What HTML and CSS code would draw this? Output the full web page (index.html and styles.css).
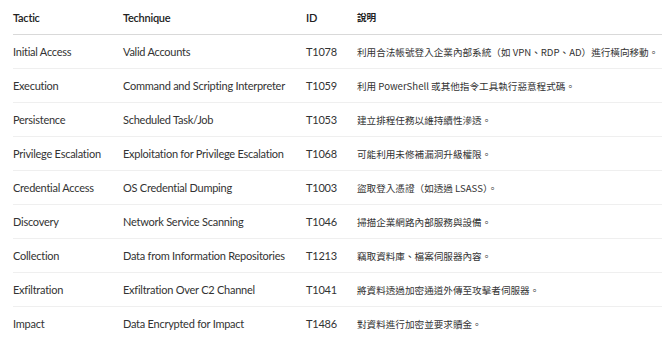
FILE: index.html
```html
<!DOCTYPE html>
<html lang="zh-Hant">
<head>
<meta charset="utf-8">
<link rel="stylesheet" href="styles.css">
</head>
<body>
<div class="table">
  <div class="row head">
    <div class="cell">Tactic</div>
    <div class="cell">Technique</div>
    <div class="cell">ID</div>
    <div class="cell desc">說明</div>
  </div>
  <div class="row">
    <div class="cell">Initial Access</div>
    <div class="cell">Valid Accounts</div>
    <div class="cell">T1078</div>
    <div class="cell desc">利用合法帳號登入企業內部系統（如 VPN、RDP、AD）進行橫向移動。</div>
  </div>
  <div class="row">
    <div class="cell">Execution</div>
    <div class="cell">Command and Scripting Interpreter</div>
    <div class="cell">T1059</div>
    <div class="cell desc">利用 PowerShell 或其他指令工具執行惡意程式碼。</div>
  </div>
  <div class="row">
    <div class="cell">Persistence</div>
    <div class="cell">Scheduled Task/Job</div>
    <div class="cell">T1053</div>
    <div class="cell desc">建立排程任務以維持續性滲透。</div>
  </div>
  <div class="row">
    <div class="cell">Privilege Escalation</div>
    <div class="cell">Exploitation for Privilege Escalation</div>
    <div class="cell">T1068</div>
    <div class="cell desc">可能利用未修補漏洞升級權限。</div>
  </div>
  <div class="row">
    <div class="cell">Credential Access</div>
    <div class="cell">OS Credential Dumping</div>
    <div class="cell">T1003</div>
    <div class="cell desc">盜取登入憑證（如透過 LSASS）。</div>
  </div>
  <div class="row">
    <div class="cell">Discovery</div>
    <div class="cell">Network Service Scanning</div>
    <div class="cell">T1046</div>
    <div class="cell desc">掃描企業網路內部服務與設備。</div>
  </div>
  <div class="row">
    <div class="cell">Collection</div>
    <div class="cell">Data from Information Repositories</div>
    <div class="cell">T1213</div>
    <div class="cell desc">竊取資料庫、檔案伺服器內容。</div>
  </div>
  <div class="row">
    <div class="cell">Exfiltration</div>
    <div class="cell">Exfiltration Over C2 Channel</div>
    <div class="cell">T1041</div>
    <div class="cell desc">將資料透過加密通道外傳至攻擊者伺服器。</div>
  </div>
  <div class="row last">
    <div class="cell">Impact</div>
    <div class="cell">Data Encrypted for Impact</div>
    <div class="cell">T1486</div>
    <div class="cell desc">對資料進行加密並要求贖金。</div>
  </div>
</div>
</body>
</html>
```

FILE: styles.css
```css
html, body {
  margin: 0;
  padding: 0;
  background: #ffffff;
}
body {
  font-family: Lato, "Noto Sans CJK TC", sans-serif;
  font-size: 11px;
  letter-spacing: -0.25px;
  color: #333333;
  overflow: hidden;
}
.table {
  margin-left: 13px;
  display: flex;
  flex-direction: column;
}
.row {
  display: grid;
  grid-template-columns: 110px 183px 51px 1fr;
  height: 33px;
  align-items: center;
  border-bottom: 1px solid #efefef;
  white-space: nowrap;
}
.row.head {
  height: 34px;
  border-bottom: 1px solid #d9d9d9;
}
.row.head .cell {
  font-weight: 600;
  color: #222222;
}
.row.last {
  border-bottom-color: transparent;
}
.cell.desc {
  font-family: "Noto Sans CJK TC", sans-serif;
  font-size: 9.6px;
  letter-spacing: 0;
}
```
